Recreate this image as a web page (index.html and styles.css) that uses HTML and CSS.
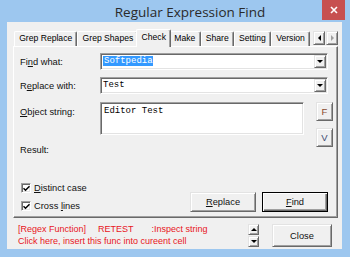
FILE: index.html
```html
<!DOCTYPE html>
<html lang="en">
<head>
  <meta charset="UTF-8">
  <title>Regular Expression Find</title>
  <link rel="stylesheet" href="styles.css">
</head>
<body>
  <div class="window">
    <div class="titlebar">
      <div class="title">Regular Expression Find</div>
      <div class="close">
        <svg width="8" height="8" viewBox="0 0 8 8"><path d="M1 1L7 7M7 1L1 7" stroke="#fff" stroke-width="1.6"/></svg>
      </div>
    </div>

    <div class="client">
      <div class="tabs">
        <div class="tab">Grep Replace</div>
        <div class="tab">Grep Shapes</div>
        <div class="tab active">Check</div>
        <div class="tab">Make</div>
        <div class="tab">Share</div>
        <div class="tab">Setting</div>
        <div class="tab">Version</div>
        <div class="tab-arrows">
          <div class="btn arrow"><span class="tri-left"></span></div>
          <div class="btn arrow"><span class="tri-right"></span></div>
        </div>
      </div>

      <div class="panel">
        <div class="row">
          <div class="label">Fi<u>n</u>d what:</div>
          <div class="combo">
            <div class="combo-text"><span class="selected">Softpedia</span></div>
            <div class="btn drop"><span class="tri-down"></span></div>
          </div>
        </div>
        <div class="row">
          <div class="label">R<u>e</u>place with:</div>
          <div class="combo">
            <div class="combo-text">Test</div>
            <div class="btn drop"><span class="tri-down"></span></div>
          </div>
        </div>

        <div class="obj-row">
          <div class="obj-main">
            <div class="row top">
              <div class="label pad"><u>O</u>bject string:</div>
              <div class="textarea">Editor Test</div>
            </div>
            <div class="label result">Result:</div>
          </div>
          <div class="side">
            <div class="btn small f">F</div>
            <div class="btn small v">V</div>
          </div>
        </div>

        <div class="bottom">
          <div class="checks">
            <div class="check-row"><span class="checkbox"><svg width="7" height="7" viewBox="0 0 7 7"><path d="M0.5 3.2L2.5 5.2L6.5 1.2" stroke="#000" stroke-width="1.5" fill="none"/></svg></span><span><u>D</u>istinct case</span></div>
            <div class="check-row"><span class="checkbox"><svg width="7" height="7" viewBox="0 0 7 7"><path d="M0.5 3.2L2.5 5.2L6.5 1.2" stroke="#000" stroke-width="1.5" fill="none"/></svg></span><span>Cross <u>l</u>ines</span></div>
          </div>
          <div class="btn push replace"><span><u>R</u>eplace</span></div>
          <div class="btn push default"><span><u>F</u>ind</span></div>
        </div>
      </div>

      <div class="footer">
        <div class="info">
          <div>[Regex Function]<span class="gap1">RETEST</span><span class="gap2">:Inspect string</span></div>
          <div>Click here, insert this func into cureent cell</div>
        </div>
        <div class="spin">
          <div class="btn spin-btn"><span class="tri-up"></span></div>
          <div class="btn spin-btn"><span class="tri-down"></span></div>
        </div>
        <div class="btn push close-btn">Close</div>
      </div>
    </div>
  </div>
</body>
</html>
```

FILE: styles.css
```css
* {
  box-sizing: border-box;
}

html,
body {
  margin: 0;
  padding: 0;
}

body {
  width: 350px;
  height: 257px;
  overflow: hidden;
  font-family: "Liberation Sans", Arial, sans-serif;
  font-size: 9px;
  color: #000;
}

u {
  text-decoration-thickness: 1px;
  text-underline-offset: 1px;
}

.window {
  width: 350px;
  height: 257px;
  background: #9dc7ef;
  display: flex;
  flex-direction: column;
}

/* title bar */
.titlebar {
  height: 22px;
  flex-shrink: 0;
  display: flex;
}

.title {
  flex: 1;
  padding: 3px 0 0 58px;
  text-align: center;
  font-family: "Open Sans", "Liberation Sans", sans-serif;
  font-size: 13.5px;
  line-height: 18px;
  color: #2a2a2a;
}

.close {
  width: 23px;
  height: 20px;
  margin-right: 5px;
  background: #c75050;
  display: flex;
  align-items: center;
  justify-content: center;
}

/* client area */
.client {
  flex: 1;
  margin: 0 8px 8px 7px;
  padding: 7px 4px 0 6px;
  background: #f0f0f0;
  display: flex;
  flex-direction: column;
}

/* classic 3d edges */
.btn {
  background: #f0f0f0;
  border: 1px solid;
  border-color: #e3e3e3 #696969 #696969 #e3e3e3;
  box-shadow: inset 1px 1px #fff, inset -1px -1px #a0a0a0;
  display: flex;
  align-items: center;
  justify-content: center;
}

.tri-down,
.tri-up,
.tri-left,
.tri-right {
  width: 0;
  height: 0;
  border: 3px solid transparent;
}

.tri-down {
  border-bottom-width: 0;
  border-top-color: #000;
}

.tri-up {
  border-top-width: 0;
  border-bottom-color: #000;
}

.tri-left {
  border-left-width: 0;
  border-right-color: #000;
}

.tri-right {
  border-right-width: 0;
  border-left-color: #a0a0a0;
}

/* tabs */
.tabs {
  height: 17px;
  flex-shrink: 0;
  display: flex;
  align-items: flex-end;
  padding-left: 1px;
  position: relative;
  z-index: 1;
}

.tab {
  height: 15px;
  padding: 0 4.2px;
  font-size: 8.6px;
  line-height: 13px;
  white-space: nowrap;
  border-top: 1px solid #fff;
  border-left: 1px solid #fff;
  border-right: 1px solid #696969;
  box-shadow: inset -1px 0 #a0a0a0;
  border-radius: 2px 2px 0 0;
  background: #f0f0f0;
}

.tab.active {
  height: 18px;
  margin: 0 -2px -1px;
  padding-top: 1px;
  position: relative;
  z-index: 2;
}

.tab-arrows {
  margin-left: auto;
  margin-bottom: 1px;
  display: flex;
}

.arrow {
  width: 12px;
  height: 14px;
}

.arrow + .arrow {
  margin-left: 1px;
}

/* tab page */
.panel {
  height: 172px;
  flex-shrink: 0;
  border-top: 1px solid #fff;
  border-left: 1px solid #fff;
  border-right: 1px solid #696969;
  border-bottom: 1px solid #696969;
  box-shadow: inset -1px -1px #a0a0a0;
  padding: 6px 9px 5px 6px;
  display: flex;
  flex-direction: column;
}

.row {
  display: flex;
  align-items: center;
}

.row + .row {
  margin-top: 7px;
}

.row.top {
  align-items: flex-start;
}

.label {
  width: 80px;
  flex-shrink: 0;
  font-size: 9.3px;
  line-height: 12px;
  color: #111;
}

.label.pad {
  padding-top: 4px;
}

.combo {
  width: 233px;
  height: 17px;
  background: #fff;
  border: 1px solid;
  border-color: #a0a0a0 #fff #fff #a0a0a0;
  box-shadow: inset 1px 1px #696969, inset -1px -1px #e3e3e3;
  padding: 1px 1px 1px 2px;
  display: flex;
  align-items: center;
}

.combo-text {
  flex: 1;
  font-family: "Liberation Mono", "Courier New", monospace;
  font-size: 9px;
  line-height: 11px;
}

.selected {
  background: #3399ff;
  color: #fff;
  padding: 0 0 0 1px;
}

.drop {
  width: 12px;
  height: 13px;
}

.obj-row {
  display: flex;
  margin-top: 8px;
}

.textarea {
  width: 204px;
  height: 33px;
  background: #fff;
  border: 1px solid;
  border-color: #a0a0a0 #fff #fff #a0a0a0;
  box-shadow: inset 1px 1px #696969, inset -1px -1px #e3e3e3;
  padding: 2px 3px;
  font-family: "Liberation Mono", "Courier New", monospace;
  font-size: 9px;
  line-height: 12px;
}

.result {
  margin-top: 9px;
}

.side {
  margin-left: 12px;
  display: flex;
  flex-direction: column;
  gap: 7px;
}

.small {
  width: 17px;
  height: 19px;
  font-size: 9.5px;
}

.small.f {
  color: #8a4a2e;
}

.small.v {
  color: #3f4a72;
}

.bottom {
  margin-top: auto;
  display: flex;
  align-items: flex-end;
}

.checks {
  display: flex;
  flex-direction: column;
  gap: 6px;
  margin-right: auto;
}

.check-row {
  display: flex;
  align-items: center;
  height: 12px;
  font-size: 9.3px;
  color: #111;
}

.checkbox {
  width: 10px;
  height: 10px;
  margin: 0 3px 0 1px;
  background: #fff;
  border: 1px solid;
  border-color: #a0a0a0 #fff #fff #a0a0a0;
  box-shadow: inset 1px 1px #696969, inset -1px -1px #e3e3e3;
  display: flex;
  align-items: center;
  justify-content: center;
}

.push {
  height: 20px;
  width: 66px;
  font-size: 9.3px;
  color: #111;
}

.default {
  margin-left: 6px;
  border: 1px solid #000;
  box-shadow: inset 1px 1px #fff, inset -1px -1px #696969, inset -2px -2px #a0a0a0;
}

/* footer */
.footer {
  display: flex;
  padding: 5px 6px 0 5px;
}

.info {
  flex: 1;
  color: #e8141c;
  font-size: 9px;
  line-height: 12px;
  white-space: nowrap;
}

.gap1 {
  margin-left: 12px;
}

.gap2 {
  margin-left: 18px;
}

.spin {
  margin-top: 1px;
  display: flex;
  flex-direction: column;
  gap: 1px;
}

.spin-btn {
  width: 11px;
  height: 11px;
}

.close-btn {
  width: 60px;
  height: 23px;
  margin: 1px 0 0 13px;
}
```
